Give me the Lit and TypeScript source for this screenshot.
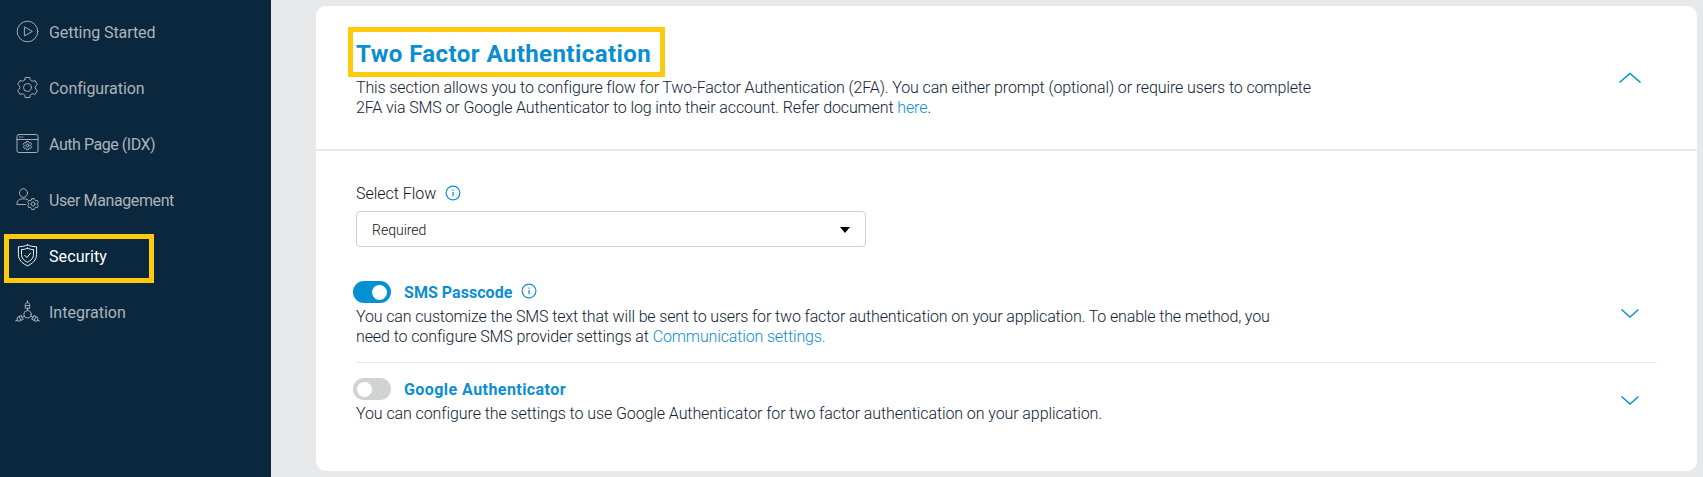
import { LitElement, html, svg, css, nothing } from "lit";
import { customElement, property } from "lit/decorators.js";
import { classMap } from "lit/directives/class-map.js";

/** Six-tooth cog outline, first tooth pointing up. */
function cog(cx: number, cy: number, r: number): string {
  const pt = (deg: number, k: number) => {
    const a = ((deg - 90) * Math.PI) / 180;
    return `${(cx + r * k * Math.cos(a)).toFixed(2)} ${(cy + r * k * Math.sin(a)).toFixed(2)}`;
  };
  let d = "";
  for (let i = 0; i < 6; i++) {
    const t = i * 60;
    d += `${i ? "L" : "M"}${pt(t - 19, 0.8)}L${pt(t - 13, 1)}L${pt(t + 13, 1)}L${pt(t + 19, 0.8)}Q${pt(t + 30, 0.7)} ${pt(t + 41, 0.8)}`;
  }
  return d + "Z";
}

const arm = svg`<path d="M9.300 8V4.600c0-1.200.8-1.900 2.200-1.900s2.200.7 2.200 1.900V8zM11.500 2.700V.6M9.300 5.600h4.400M11.500 8v2.500"/>`;

const icons: Record<string, unknown> = {
  play: svg`<circle cx="11.5" cy="11.5" r="10.3"/><path d="M8.4 7.3v8.6l7.6-4.3z"/>`,
  cog: svg`<path d=${cog(11.5, 11.5, 10.3)}/><circle cx="11.5" cy="11.5" r="4"/>`,
  page: svg`<rect x="1" y="2.5" width="21" height="18" rx="1.8"/><path d="M1 7.500h21M3.400 5h1M5.800 5h1"/><path d=${cog(11.5, 13.5, 4.3)}/><circle cx="11.5" cy="13.5" r="1.5"/>`,
  user: svg`<ellipse cx="7.5" cy="5" rx="4" ry="4.3"/><path d="M9.6 16.5H.9c0-3.6 1.9-5.6 4.7-5.6h3.8c1 0 1.8.3 2.4.8"/><path d=${cog(17, 16, 5.6)}/><circle cx="17" cy="16" r="2"/>`,
  shield: svg`<path d="M11.500.9c2.700 1.300 5.500 1.700 9.100 1.900V10.500c0 5.400-4.200 9.200-9.100 11.300-4.900-2.100-9.100-5.900-9.100-11.300V2.800C6 2.600 8.800 2.200 11.500.9z"/><path d="M11.500 4.200c1.900.9 3.700 1.300 6 1.400v5c0 3.500-2.700 6-6 7.600-3.300-1.600-6-4.100-6-7.600v-5c2.300-.1 4.100-.5 6-1.400z"/><path d="M8.700 11.300l2.200 2.200 3.600-4.400"/>`,
  nodes: svg`<circle cx="11.5" cy="14.300" r="3.700"/>${arm}<g transform="rotate(120 11.500 14.200)">${arm}</g><g transform="rotate(240 11.500 14.200)">${arm}</g>`,
};

@customElement("nav-entry")
class NavEntry extends LitElement {
  @property() icon = "";
  @property() label = "";
  @property() tracking = "0px";
  @property({ type: Boolean }) active = false;

  static styles = css`
    :host { display: block; }
    .entry { position: relative; display: flex; align-items: center; height: 56px; padding-left: 15.500px; gap: 10px; color: #acb4ba; }
    .entry.active { color: #fff; }
    .glyph { width: 23px; height: 23px; margin-bottom: 1px; fill: none; stroke: currentColor; stroke-width: .95; stroke-linejoin: round; stroke-linecap: round; overflow: visible; }
    .text { font-size: 16px; line-height: 20px; padding: 1px 0 0 .5px; white-space: nowrap; }
    .mark { position: absolute; left: 4px; top: 6px; width: 150px; height: 49px; box-sizing: border-box; border: 5px solid #ffc90e; }
  `;

  render() {
    return html`<div class=${classMap({ entry: true, active: this.active })}>
      <svg class="glyph" viewBox="0 0 23 23">${icons[this.icon]}</svg>
      <span class="text" style="letter-spacing:${this.tracking}">${this.label}</span>
      ${this.active ? html`<span class="mark"></span>` : nothing}
    </div>`;
  }
}

@customElement("info-dot")
class InfoDot extends LitElement {
  static styles = css`
    :host { display: block; width: 16px; height: 16px; }
    .dot { display: block; fill: none; stroke: #0a8ed2; stroke-width: 1.2; }
  `;
  render() {
    return html`<svg class="dot" width="16" height="16" viewBox="0 0 16 16"><circle cx="8" cy="8" r="6.900"/><path d="M8 7v4.300M8 4.500v1.300"/></svg>`;
  }
}

@customElement("app-root")
class AppRoot extends LitElement {
  static styles = css`
    :host { display: block; font-family: Roboto, "Liberation Sans", sans-serif; color: #0f2236; }
    .app { display: flex; height: 477px; background: #e8e9eb; overflow: hidden; }
    .side { width: 271px; flex: none; box-sizing: border-box; padding-top: 4px; background: #0a273d; }
    .card { flex: 1; height: 465px; margin: 6px 6px 0 45px; background: #fff; border-radius: 10px; }
    .head { box-sizing: border-box; height: 145px; border-bottom: 2px solid #e8e8e8; padding: 31px 55px 0 40px; display: flex; justify-content: space-between; }
    .title { position: relative; margin: 0; font-size: 24px; line-height: 34px; font-weight: 700; color: #0a8ed2; letter-spacing: .43px; width: max-content; }
    .mark { position: absolute; left: -8px; top: -10px; width: 317px; height: 50px; box-sizing: border-box; border: 5px solid #ffc90e; }
    .para { margin: 0; font-size: 16px; line-height: 20px; font-weight: 300; letter-spacing: -.12px; white-space: nowrap; }
    .head .para { margin-top: 7px; }
    .link { color: #0a8ed2; text-decoration: none; }
    .chev { display: block; fill: none; stroke: #0a8ed2; stroke-width: 1.400; }
    .chev.up { margin-top: 35px; stroke-width: 1.600; }
    .body { padding: 33px 40px 0; }
    .label { display: flex; align-items: center; gap: 8.500px; height: 20px; font-size: 16px; line-height: 20px; font-weight: 300; color: #111; letter-spacing: -.03px; }
    .label info-dot { margin-bottom: 2px; }
    .select { box-sizing: border-box; margin-top: 7px; width: 510px; height: 36px; border: 1px solid #d0d0d0; border-radius: 4px; padding: 1px 15px 0; display: flex; align-items: center; justify-content: space-between; font-size: 14px; font-weight: 300; color: #111; }
    .caret { border: 5.500px solid transparent; border-top: 6px solid #000; border-bottom: 0; }
    .method { display: flex; justify-content: space-between; padding-right: 17px; box-sizing: border-box; }
    .sms { height: 116px; padding-top: 34px; border-bottom: 1px solid #e6e6e6; }
    .google { padding-top: 15px; }
    .row { display: flex; align-items: center; height: 22px; margin-left: -3px; }
    .switch { width: 38px; height: 22px; border-radius: 11px; background: #d1d2d4; box-sizing: border-box; padding: 3.500px; display: flex; }
    .switch.on { background: #0590d3; justify-content: flex-end; padding-right: 4.500px; }
    .knob { width: 15px; height: 15px; border-radius: 50%; background: #fff; }
    .name { margin: 1px 8.500px 0 13px; font-size: 16px; line-height: 20px; font-weight: 700; color: #0a8ed2; letter-spacing: .04px; }
    .row info-dot { margin-bottom: 2px; }
    .wide { letter-spacing: .44px; }
    .method .para { margin-top: 4px; letter-spacing: -.14px; }
    .google .para { letter-spacing: -.088px; }
    .lead { letter-spacing: -.1px; }
    .sms .chev { margin-top: 27px; }
    .google .chev { margin-top: 17px; }
  `;

  private chevron(dir: "up" | "down") {
    return dir === "up"
      ? html`<svg class="chev up" width="24" height="12" viewBox="0 0 24 12"><path d="M1.500 10.500L12 1.500l10.500 9"/></svg>`
      : html`<svg class="chev" width="20" height="12" viewBox="0 0 20 12"><path d="M1.500 1.500l8.500 7.500 8.500-7.500"/></svg>`;
  }

  render() {
    return html`<div class="app">
      <nav class="side">
        <nav-entry icon="play" label="Getting Started" tracking="-0.07px"></nav-entry>
        <nav-entry icon="cog" label="Configuration" tracking="-0.08px"></nav-entry>
        <nav-entry icon="page" label="Auth Page (IDX)" tracking="-0.46px"></nav-entry>
        <nav-entry icon="user" label="User Management" tracking="-0.39px"></nav-entry>
        <nav-entry icon="shield" label="Security" tracking="0.09px" active></nav-entry>
        <nav-entry icon="nodes" label="Integration" tracking="0px"></nav-entry>
      </nav>
      <main class="card">
        <header class="head">
          <div>
            <h1 class="title">Two Factor Authentication<span class="mark"></span></h1>
            <p class="para">This section allows you to configure flow for Two-Factor Authentication (2FA). You can either prompt (optional) or require users to complete<br />2FA via SMS or Google Authenticator to log into their account. Refer document <a class="link">here</a>.</p>
          </div>
          ${this.chevron("up")}
        </header>
        <div class="body">
          <div class="label">Select Flow<info-dot></info-dot></div>
          <div class="select"><span>Required</span><span class="caret"></span></div>
          <section class="method sms">
            <div>
              <div class="row"><span class="switch on"><span class="knob"></span></span><h2 class="name">SMS Passcode</h2><info-dot></info-dot></div>
              <p class="para">You can customize the SMS text that will be sent to users for two factor authentication on your application. To enable the method, you<br /><span class="lead">need to configure SMS provider settings at </span><a class="link">Communication settings.</a></p>
            </div>
            ${this.chevron("down")}
          </section>
          <section class="method google">
            <div>
              <div class="row"><span class="switch"><span class="knob"></span></span><h2 class="name wide">Google Authenticator</h2></div>
              <p class="para">You can configure the settings to use Google Authenticator for two factor authentication on your application.</p>
            </div>
            ${this.chevron("down")}
          </section>
        </div>
      </main>
    </div>`;
  }
}
